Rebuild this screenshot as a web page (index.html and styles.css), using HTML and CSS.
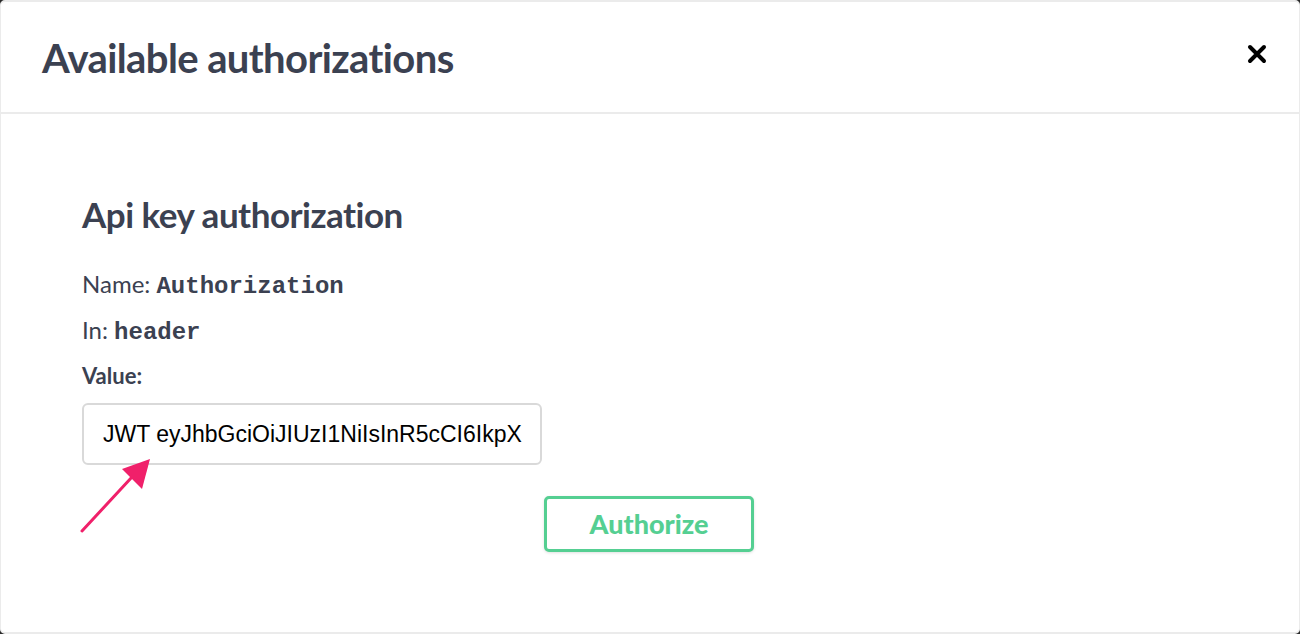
FILE: index.html
```html
<!DOCTYPE html>
<html>
<head>
<meta charset="utf-8">
<link rel="stylesheet" href="styles.css">
</head>
<body>
<div class="modal">
  <div class="modal-header">
    <h3 class="modal-title">Available authorizations</h3>
    <button class="close" aria-label="Close">
      <svg width="20" height="20" viewBox="0 0 20 20"><path d="M3 3 L17 17 M17 3 L3 17" stroke="#000" stroke-width="4" stroke-linecap="round"/></svg>
    </button>
  </div>
  <div class="modal-body">
    <h4 class="auth-title">Api key authorization</h4>
    <div class="row">Name: <code>Authorization</code></div>
    <div class="row">In: <code>header</code></div>
    <div class="row label">Value:</div>
    <div class="field">
      <input class="value-input" type="text" value="JWT eyJhbGciOiJIUzI1NiIsInR5cCI6IkpX">
    </div>
    <div class="actions">
      <button class="btn-authorize">Authorize</button>
    </div>
  </div>
  <svg class="arrow" width="90" height="90" viewBox="0 0 90 90">
    <line x1="2" y1="86" x2="52" y2="32" stroke="#f0206a" stroke-width="3" stroke-linecap="round"/>
    <polygon points="70,14 42,24 62,44" fill="#f0206a"/>
  </svg>
</div>
</body>
</html>
```

FILE: styles.css
```css
html, body {
  margin: 0;
  padding: 0;
  background: #2a2a2a;
}
body {
  width: 1300px;
  height: 634px;
  overflow: hidden;
}
.modal {
  position: relative;
  box-sizing: border-box;
  width: 1300px;
  height: 634px;
  background: #fff;
  border-style: solid;
  border-color: #ebebeb;
  border-width: 2px 1px 2px 1px;
  border-radius: 5px;
  display: flex;
  flex-direction: column;
  font-family: Lato, "Open Sans", sans-serif;
  color: #3b4151;
}
.modal-header {
  height: 110px;
  border-bottom: 2px solid #ebebeb;
  display: flex;
  align-items: center;
  justify-content: space-between;
  padding: 0 31px 0 41px;
}
.modal-title {
  margin: 0;
  font-size: 40px;
  font-weight: 700;
  letter-spacing: -0.6px;
  color: #3b4151;
  padding-top: 2px;
}
.close {
  border: none;
  background: none;
  padding: 0;
  width: 22px;
  height: 22px;
  display: flex;
  align-items: center;
  justify-content: center;
  margin-bottom: 6px;
}
.modal-body {
  padding: 80px 0 0 81px;
  display: flex;
  flex-direction: column;
}
.auth-title {
  margin: 0 0 36px 0;
  font-size: 35px;
  font-weight: 700;
  letter-spacing: -0.5px;
  line-height: 40px;
}
.row {
  font-size: 24px;
  line-height: 28px;
  margin-bottom: 15px;
}
.row code {
  font-family: "Liberation Mono", "Courier New", monospace;
  font-weight: 700;
  font-size: 24px;
  color: #3b4151;
}
.row.label {
  font-weight: 700;
  font-size: 22px;
  margin-bottom: 13px;
}
.field {
  display: flex;
}
.value-input {
  box-sizing: border-box;
  width: 460px;
  height: 62px;
  border: 2px solid #d9d9d9;
  border-radius: 6px;
  padding: 0 0 0 19px;
  font-family: "Liberation Sans", Arial, sans-serif;
  font-size: 23px;
  color: #000;
  background: #fff;
}
.actions {
  display: flex;
  justify-content: flex-start;
  padding: 31px 0 0 462px;
}
.btn-authorize {
  box-sizing: border-box;
  width: 210px;
  height: 56px;
  border: 3px solid #55cf92;
  border-radius: 5px;
  background: #fff;
  color: #55cf92;
  font-family: Lato, "Open Sans", sans-serif;
  font-weight: 900;
  font-size: 27px;
  box-shadow: 0 1px 3px rgba(0,0,0,0.12);
  padding: 0 0 2px 0;
}
.arrow {
  position: absolute;
  left: 79px;
  top: 443px;
}
```
